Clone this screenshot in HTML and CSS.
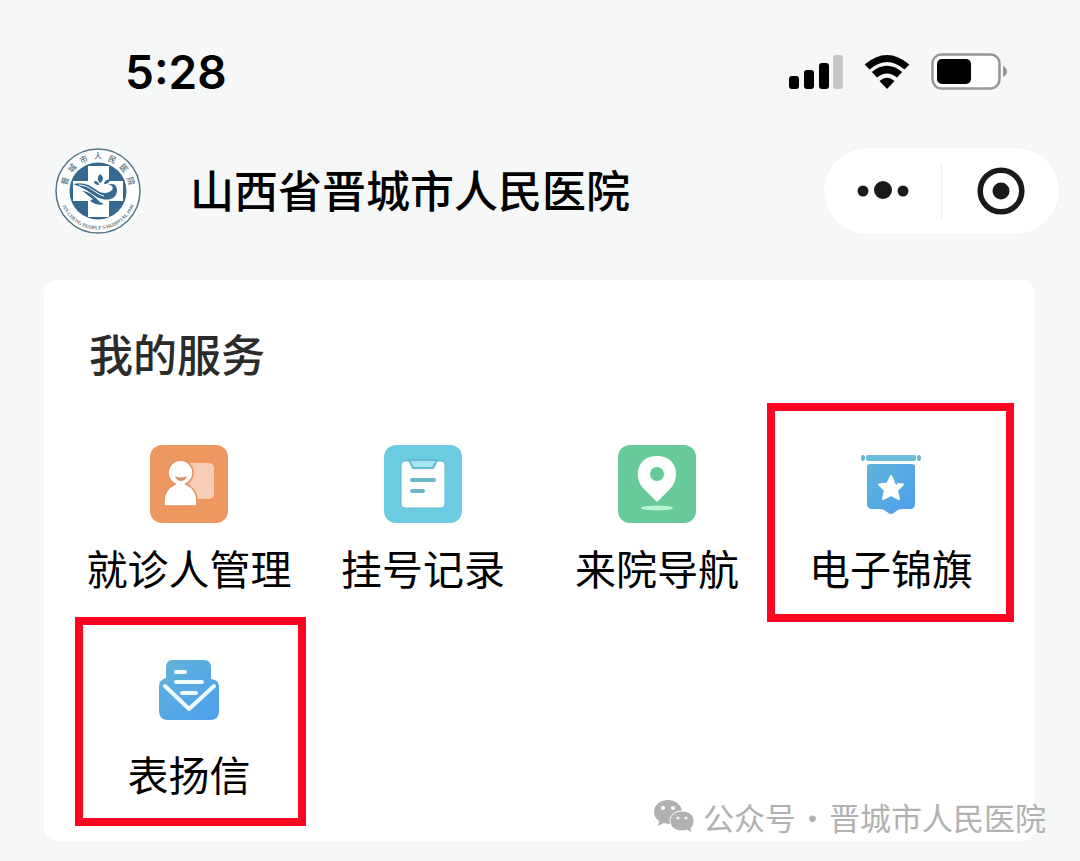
FILE: index.html
```html
<!DOCTYPE html>
<html lang="zh-CN">
<head>
<meta charset="utf-8">
<meta name="viewport" content="width=device-width, initial-scale=1">
<title>山西省晋城市人民医院</title>
<link rel="stylesheet" href="styles.css">
</head>
<body>
<div class="status-bar">
  <time class="clock">5:28</time>
  <div class="indicators">
    <svg width="54" height="36" viewBox="0 0 54 36" aria-hidden="true">
      <rect x="0" y="22" width="10" height="13" rx="3"/>
      <rect x="15" y="16" width="10" height="19" rx="3"/>
      <rect x="30" y="9" width="10" height="26" rx="3"/>
      <rect x="44" y="1" width="10" height="34" rx="3" fill="#c6c8c7"/>
    </svg>
    <svg width="46" height="36" viewBox="0 0 46 36" aria-hidden="true">
      <path d="M0.600 10.500Q23-8.500 45.400 10.500L40.500 15.500Q23 .5 5.500 15.500Z"/>
      <path d="M7.800 18Q23 5.500 38.200 18L33 23.500Q23 15.500 13 23.500Z"/>
      <path d="M15.500 27Q23 20.500 30.500 27L23 35Z"/>
    </svg>
    <svg width="76" height="38" viewBox="0 0 76 38" aria-hidden="true">
      <rect x="1.500" y="1.500" width="67" height="34" rx="9" fill="#fff" stroke="#969897" stroke-width="2.500"/>
      <rect x="6" y="6" width="34" height="25" rx="5"/>
      <path d="M72 13Q76 15 76 18.500T72 24Z" fill="#969897"/>
    </svg>
  </div>
</div>

<header class="nav">
  <svg class="logo" width="88" height="88" viewBox="0 0 88 88" role="img" aria-label="晋城市人民医院">
    <defs>
      <path id="arc-top" d="M19 63A31.500 31.500 0 1 1 69 63"/>
      <path id="arc-bottom" d="M5.500 44A38.500 38.500 0 0 0 82.500 44"/>
    </defs>
    <circle cx="44" cy="44" r="42" fill="#fff" stroke="#557684" stroke-width="1.500"/>
    <circle cx="44" cy="44" r="28.500" fill="#356990"/>
    <path fill="#fff" d="M34 19H55V34H69V54H55V70H34V54H19V34H34Z"/>
    <path fill="#356990" d="M19 37C29 35 34 37 41 42C47 47 54 47 58 43C60 40 58 38 54 38C60 35 63 39 63 43C63 51 56 54 48 52C40 50 36 43 19 37ZM28 44C35 44 40 49 46 55C40 55 35 48 28 44ZM39 52L50 57C44 59 39 56 36 54Z"/>
    <path fill="none" stroke="#fff" d="M25 38C36 38 41 47 50 49"/>
    <path fill="#356990" d="M46 27C50 30 50 33 46 36C43 33 43 30 46 27ZM40 34Q45 34 45 38Q40 38 40 34ZM56 32Q56 37 50 37Q50 33 56 32Z"/>
    <text class="logo-cn"><textPath href="#arc-top" startOffset="50%" text-anchor="middle">晋&#160;&#160;&#160;城&#160;&#160;&#160;市&#160;&#160;&#160;人&#160;&#160;&#160;民&#160;&#160;&#160;医&#160;&#160;&#160;院</textPath></text>
    <text class="logo-en"><textPath href="#arc-bottom" startOffset="50%" text-anchor="middle">JIN CHENG PEOPLE'S HOSPITAL 1946</textPath></text>
  </svg>
  <h1 class="title">山西省晋城市人民医院</h1>
  <div class="capsule">
    <button class="capsule-button" type="button" aria-label="更多">
      <svg width="52" height="20" viewBox="0 0 52 20"><circle cx="6" cy="10" r="5.500"/><circle cx="26" cy="9" r="9"/><circle cx="46" cy="10" r="5.500"/></svg>
    </button>
    <button class="capsule-button" type="button" aria-label="关闭">
      <svg width="48" height="48" viewBox="0 0 48 48"><circle cx="24" cy="24" r="20.800" fill="none" stroke="#1a1a1a" stroke-width="5.500"/><circle cx="24" cy="24" r="8.500"/></svg>
    </button>
  </div>
</header>

<main class="card">
  <h2 class="card-title">我的服务</h2>
  <div class="services">
    <button class="service" type="button">
      <svg width="78" height="78" viewBox="0 0 78 78" aria-hidden="true">
        <rect width="78" height="78" rx="12" fill="#ee9861"/>
        <rect x="35" y="18" width="29" height="36" rx="5" fill="#f8cdb5"/>
        <path d="M14 61V56Q14 44 25 39A12.500 12.500 0 1 1 36 39Q47 44 47 56V61Z" fill="#fff" stroke="#e48f5e" stroke-width="1.500"/>
        <path d="M25 31Q31 34 37 31Q35 36 31 36T25 31Z" fill="#d88d61"/>
      </svg>
      <span>就诊人管理</span>
    </button>
    <button class="service" type="button">
      <svg width="78" height="78" viewBox="0 0 78 78" aria-hidden="true">
        <rect width="78" height="78" rx="12" fill="#6bcbe1"/>
        <rect x="17" y="16" width="44" height="47" rx="4" fill="#fff" stroke="#61bacd"/>
        <path d="M25 15H53L49 23H29Z" fill="#a6e6f3" stroke="#61bacd" stroke-width="2"/>
        <path d="M28 35H50M28 46H39" stroke="#6bb7ca" stroke-width="4" stroke-linecap="round"/>
      </svg>
      <span>挂号记录</span>
    </button>
    <button class="service" type="button">
      <svg width="78" height="78" viewBox="0 0 78 78" aria-hidden="true">
        <rect width="78" height="78" rx="12" fill="#68ca98"/>
        <path fill="#fff" fill-rule="evenodd" d="M39 57L25 43C16 33 18 11 39 11S62 33 53 43ZM39 22A7 7 0 1 0 39 36A7 7 0 1 0 39 22Z"/>
        <ellipse cx="39" cy="63" rx="16" ry="2.500" fill="#b5f5d3"/>
      </svg>
      <span>来院导航</span>
    </button>
    <button class="service" type="button">
      <svg width="78" height="78" viewBox="0 0 78 78" aria-hidden="true">
        <defs><linearGradient id="blue" x1="0" y1="0" x2="1" y2="1"><stop offset="0" stop-color="#61b4d9"/><stop offset="1" stop-color="#4b9eed"/></linearGradient></defs>
        <rect x="14" y="10" width="50" height="6" rx="2" fill="#6bbddd"/>
        <ellipse cx="11" cy="13" rx="2" ry="3" fill="#6bb1cb"/><ellipse cx="67" cy="13" rx="2" ry="3" fill="#6bb1cb"/>
        <path fill="url(#blue)" d="M18 19H60Q63 19 63 22V59Q63 64 58 64H50Q46 64 43 67Q39 71 35 67Q32 64 28 64H20Q15 64 15 59V22Q15 19 18 19Z"/>
        <path fill="#fff" stroke="#fff" stroke-width="2" stroke-linejoin="round" d="M39 31L42.500 38.500L51 39.500L45 45.500L47 54L39 50L31 54L33 45.500L27 39.500L35.500 38.500Z"/>
        <path d="M43 37L45 39" stroke="#64addf" stroke-width="1.500" stroke-linecap="round"/>
      </svg>
      <span>电子锦旗</span>
      <i class="highlight highlight-banner"></i>
    </button>
    <button class="service" type="button">
      <svg width="78" height="78" viewBox="0 0 78 78" aria-hidden="true">
        <path fill="url(#blue)" d="M22 9H54Q61 9 61 17V28Q69 29 69 35V60Q69 69 60 69H18Q9 69 9 60V35Q9 29 16 27V17Q16 9 22 9Z"/>
        <path d="M15 35L39 58L64 35" fill="none" stroke="#effcff" stroke-width="4" stroke-linejoin="round" stroke-linecap="round"/>
        <path d="M26 21H35M26 31H52M32 42H46" stroke="#effcff" stroke-width="4" stroke-linecap="round"/>
      </svg>
      <span>表扬信</span>
      <i class="highlight highlight-letter"></i>
    </button>
  </div>
</main>

<div class="watermark">
  <svg width="42" height="36" viewBox="0 0 42 36" aria-hidden="true">
    <path fill="#b1b1b1" d="M15 1C7 1 1 6 1 13C1 17 3 20 6 22L5 27L11 24Q14 25 17 25C17 16 22 12 29 12C28 5 22 1 15 1Z"/>
    <path fill="#b1b1b1" d="M29 12C22 12 17 16 17 22C17 28 22 32 29 32Q32 32 34 31L39 34L38 29C40 27 41 25 41 22C41 16 36 12 29 12Z" stroke="#fff"/>
    <g fill="#fff"><circle cx="10" cy="9" r="2"/><circle cx="20" cy="9" r="2"/><circle cx="25" cy="19" r="1.500"/><circle cx="33" cy="19" r="1.500"/></g>
  </svg>
  <span>公众号</span><span class="dot">·</span><span>晋城市人民医院</span>
</div>
</body>
</html>
```
FILE: styles.css
```css
* {
  box-sizing: border-box;
}

body {
  position: relative;
  margin: 0;
  padding-bottom: 20px;
  background: #f6f8f8;
  color: #000;
  font-family: "Noto Sans CJK SC", sans-serif;
}

button {
  padding: 0;
  border: 0;
  background: none;
  color: inherit;
  font: inherit;
}

svg {
  display: block;
  flex: none;
}

.status-bar {
  display: flex;
  align-items: center;
  justify-content: space-between;
  height: 147px;
  padding: 0 73px 4px 125px;
}

.clock {
  font: 600 46px/56px Inter, sans-serif;
}

.indicators {
  display: flex;
  align-items: center;
  gap: 21px;
}

.nav {
  display: flex;
  align-items: center;
  height: 88px;
  padding: 0 20px 0 54px;
}

.title {
  flex: 1;
  margin: 0 0 0 48px;
  padding-bottom: 4px;
  font-size: 44px;
  font-weight: 500;
  line-height: 64px;
}

.logo-cn {
  fill: #557684;
  font: 500 8px "Noto Sans CJK SC", sans-serif;
}

.logo-en {
  fill: #557684;
  font: 700 5px "Liberation Serif", serif;
}

.capsule {
  display: flex;
  align-items: center;
  width: 237px;
  height: 88px;
  border: 1px solid #f0f3f3;
  border-radius: 44px;
  background: #fff;
}

.capsule-button {
  display: flex;
  flex: 1;
  align-items: center;
  justify-content: center;
  height: 56px;
  fill: #1a1a1a;
}

.capsule-button + .capsule-button {
  border-left: 1px solid #ececec;
}

.card {
  margin: 45px 45px 0 44px;
  padding: 41px 27px 42px 28px;
  border-radius: 14px;
  background: #fff;
}

.card-title {
  margin: 0 0 60px 17px;
  color: #2b2b2b;
  font-size: 44px;
  font-weight: 500;
  line-height: 64px;
}

.services {
  display: grid;
  grid-template-columns: repeat(4, 1fr);
  row-gap: 58px;
}

.service {
  position: relative;
  display: flex;
  flex-direction: column;
  align-items: center;
  gap: 18px;
  font-size: 41px;
  line-height: 52px;
  white-space: nowrap;
}

.highlight {
  position: absolute;
  border: 8px solid #fc0521;
}

.highlight-banner {
  inset: -42px -6px -29px -7px;
}

.highlight-letter {
  inset: -34px 0 -27px 3px;
}

.watermark {
  position: absolute;
  right: 34px;
  bottom: 22px;
  display: flex;
  align-items: center;
  color: #b1b1b1;
  font-size: 31px;
  font-weight: 400;
  line-height: 44px;
}

.watermark svg {
  margin-right: 8px;
}

.dot {
  width: 33px;
  text-align: center;
}
```
